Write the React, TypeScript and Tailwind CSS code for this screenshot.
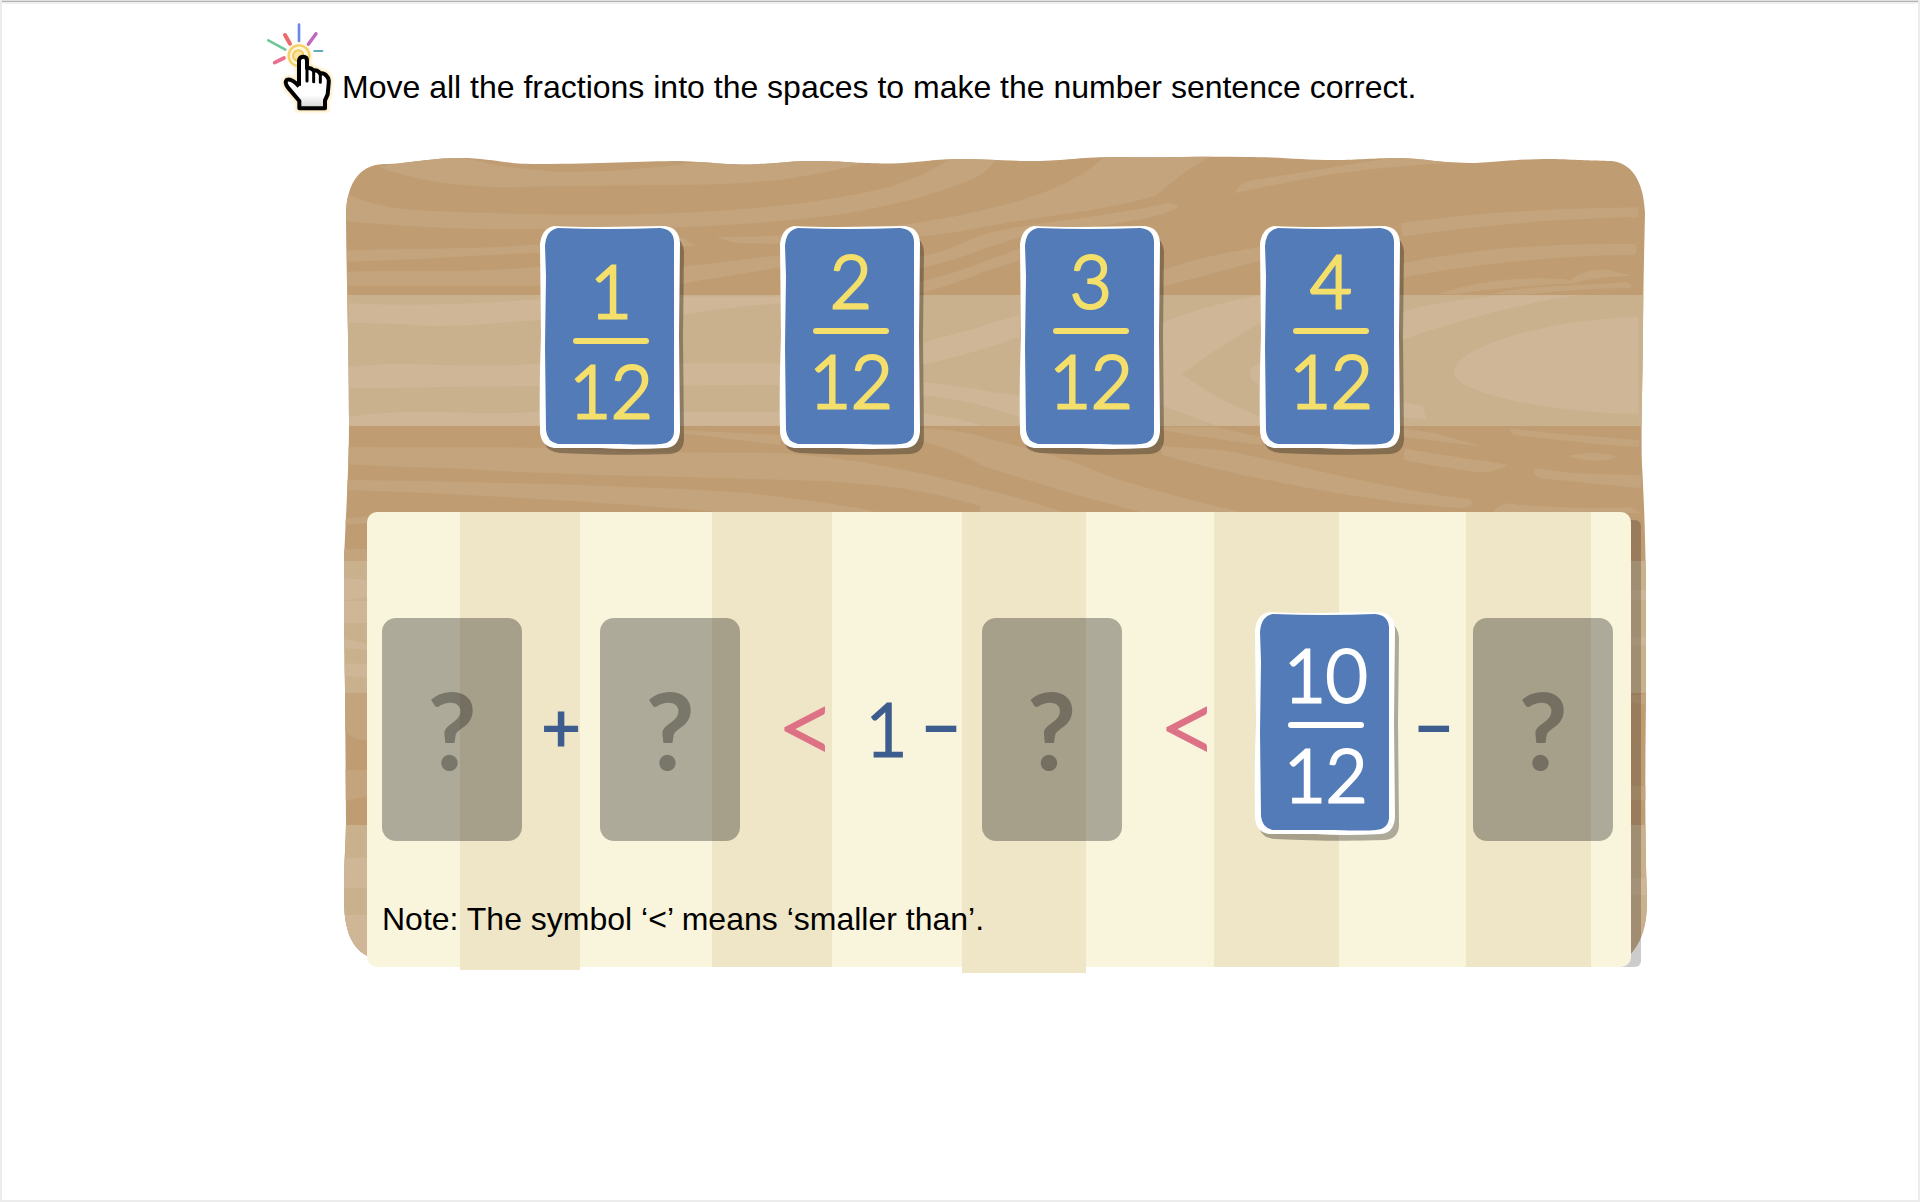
import React from "react";

const DARK = "#bf9c72";
const DARK_GRAIN = "#c4a47c";
const PALE = "#cab18e";
const PALE_GRAIN = "#ceb696";

const darkGrainLeft = [
  "M115 80Q230 138 420 142C700 130 900 145 1080 118Q1200 95 1260 70L1170 58L1000 68L870 66C780 85 640 98 540 95Q420 85 360 65L300 50L180 66Z",
  "M45 165Q110 200 180 208C400 225 650 228 850 218C1050 205 1200 180 1330 140Q1420 105 1480 50H1600L1545 105C1490 140 1400 180 1250 215C1100 245 900 265 700 262L500 268C350 270 180 262 30 242V160Z",
  "M915 292C1100 290 1350 270 1548 212V262C1400 300 1250 300 1070 312L960 308Z",
  "M40 332C150 325 350 330 500 312L840 295L870 318L500 338C350 345 180 362 40 365Z",
  "M40 395C200 388 350 400 500 380V437H40Z",
  "M835 380C950 365 1000 355 1075 345V380C1000 400 900 415 835 432Z",
  "M1400 350C1450 340 1500 310 1548 284V330C1500 350 1450 375 1400 385Z",
  "M1400 425C1460 410 1510 385 1548 370V398C1500 425 1450 445 1400 460Z",
  "M30 920C300 925 500 915 700 935L1080 940Q1300 960 1548 1045V1100Q1400 1040 1200 1025C900 1010 500 1005 300 985Q150 980 30 972Z",
  "M30 1020C400 1025 800 1040 1000 1060Q1200 1090 1300 1116H920C700 1090 300 1060 30 1050Z",
  "M835 870L1070 885V915L835 880Z",
  "M1405 865Q1500 870 1548 890V975Q1480 925 1405 905Z",
  "M30 1135L90 1130V1150L30 1155Z",
];

const darkGrainRight = [
  "M0 50H40Q25 85 0 105Z",
  "M0 212C100 185 230 130 290 45H540Q480 80 405 168Q300 205 180 225Q80 245 0 262Z",
  "M0 285C100 250 300 230 430 190Q460 190 455 205C400 240 300 255 95 290L0 330Z",
  "M0 370Q50 345 92 325V360Q50 380 0 398Z",
  "M420 390C500 355 570 335 650 320V360C570 390 480 420 420 440Z",
  "M585 160Q600 125 630 120C750 95 850 75 960 50L1090 68C950 78 800 100 700 130Q620 150 585 160Z",
  "M970 250C1150 215 1350 205 1518 202V232C1350 235 1150 255 975 290Z",
  "M975 370C1150 320 1350 310 1510 312Q1520 325 1510 345C1350 345 1150 370 975 412Z",
  "M1060 462C1120 430 1220 412 1300 415Q1350 415 1360 422Q1400 380 1450 390L1505 408C1450 410 1400 415 1370 430Q1200 440 1100 462Z",
  "M1180 462C1280 430 1400 440 1490 425Q1505 430 1500 445C1400 445 1330 455 1260 464Z",
  "M0 890Q200 950 300 1010C450 1070 550 1100 600 1116H370Q200 1060 0 975Z",
  "M0 1045Q100 1075 190 1116H0Z",
  "M415 918L560 930C750 980 950 1050 1130 1078Q1145 1095 1110 1104C900 1090 600 1010 420 945Z",
  "M420 862H545Q600 880 650 890V915Q500 890 420 870Z",
  "M975 865L1050 880L1160 920L975 890Z",
  "M980 925C1080 950 1150 960 1220 975Q1180 1000 1150 997Q1080 985 975 960Z",
  "M1218 865L1320 880L1520 900V922C1400 910 1300 895 1230 885Z",
  "M1355 947Q1420 930 1470 950Q1420 975 1355 947Z",
  "M1280 985L1370 1000L1525 1005V1045L1290 1015Q1270 1000 1280 985Z",
  "M1185 1112Q1210 1080 1240 1095L1400 1105L1500 1102L1525 1120L1185 1116Z",
];

const paleGrainLeft = [
  "M45 490C200 500 350 490 500 478V540C400 545 280 570 180 552L45 548Z",
  "M45 680C200 660 350 690 500 670H1070V735L500 738L45 745Z",
  "M45 830C200 800 350 830 500 815H1070V857H45Z",
  "M835 470H1070V490Q950 500 835 525Z",
  "M1405 610C1460 590 1510 573 1548 560V628Q1480 655 1405 675Z",
  "M1405 725Q1480 735 1548 750V795Q1480 775 1405 765Z",
  "M1405 820Q1480 830 1548 857H1405Z",
];

const paleGrainRight = [
  "M0 560Q50 540 92 525V590Q50 610 0 630Z",
  "M0 750Q50 762 92 768V830Q50 815 0 795Z",
  "M415 550Q520 495 630 470H650V545Q550 620 465 702Q560 790 650 830V857H545Q470 820 415 795Z",
  "M650 665Q620 680 622 702Q625 730 650 735Z",
  "M970 520C1020 490 1120 480 1200 466H1380C1250 490 1100 540 970 602Z",
  "M1518 530C1300 540 1095 620 1092 697C1100 770 1350 820 1518 822Z",
  "M970 785L1020 797L1030 840L970 830Z",
];

function Grain({ paths, fill, transform }: { paths: string[]; fill: string; transform: string }) {
  return (
    <g fill={fill} transform={transform}>
      {paths.map((d) => (
        <path key={d} d={d} />
      ))}
    </g>
  );
}

const LEFT = "translate(330 140) scale(.421 .3333)";
const RIGHT = "translate(980 140) scale(.4337 .3333)";

function WoodenBoard() {
  return (
    <svg
      aria-hidden="true"
      viewBox="344 156 1302 811"
      preserveAspectRatio="none"
      className="absolute inset-0 h-full w-full overflow-visible"
    >
      <defs>
        <clipPath id="board">
          <path d="M346 213C347 188 356 165 384 164C410 164 425 158 460 158C492 158 500 164 540 164C600 164 640 161 680 161C710 162 720 164.500 752 164.500C785 163 790 160.500 822 161C855 162 860 163.500 893 163.500C925 162 935 159 960 159C990 159 1005 161 1040 161C1070 160 1080 157 1120 157C1160 158 1200 156 1245 157C1280 157 1300 160 1335 160C1360 160 1370 158 1400 158C1430 159 1440 163 1475 163C1510 161 1520 159 1555 159C1580 160 1590 160.500 1612 161C1636 164 1644 188 1645 213C1644 260 1643 300 1643 340C1642 400 1641 440 1642 465C1644 500 1645 530 1646 580V700C1645 780 1645 840 1647 900C1647 930 1640 944 1628 957H370C352 950 344 930 344 900C344 860 346 840 346 820L345 690L344 620V560C346 510 349 470 349 420C349 350 346 260 346 213Z" />
        </clipPath>
        <clipPath id="left-half">
          <rect x="330" y="150" width="650" height="820" />
        </clipPath>
      </defs>
      <g clipPath="url(#board)">
        <rect x="330" y="150" width="1330" height="820" fill={DARK} />
        <rect x="330" y="295" width="1330" height="131" fill={PALE} />
        <rect x="330" y="561" width="1330" height="132" fill={PALE} />
        <rect x="330" y="825" width="1330" height="145" fill={PALE} />
        <g clipPath="url(#left-half)">
          <Grain paths={darkGrainLeft} fill={DARK_GRAIN} transform={LEFT} />
          <Grain paths={paleGrainLeft} fill={PALE_GRAIN} transform={LEFT} />
        </g>
        <Grain paths={darkGrainRight} fill={DARK_GRAIN} transform={RIGHT} />
        <Grain paths={paleGrainRight} fill={PALE_GRAIN} transform={RIGHT} />
        <g fill={DARK_GRAIN}>
          <path d="M340 549H368V561H340Z" />
          <path d="M342 693H368V741Q352 740 344 730Z" />
          <path d="M340 770H368V796L340 802Z" />
          <path d="M1630 696L1648 694V705L1630 702ZM1630 786H1648V800H1630Z" />
        </g>
        <g fill={PALE_GRAIN}>
          <path d="M340 578L368 580V597L340 601ZM340 601H368V623H340ZM340 638L368 644V650L340 648ZM340 663L368 664V678L340 675Z" />
          <path d="M340 858H368V888H340ZM340 915H368V960H340ZM1630 590H1648V600H1630ZM1630 637H1648V645H1630ZM1630 878H1648V895H1630Z" />
        </g>
      </g>
    </svg>
  );
}

function PointerIcon() {
  const hand =
    "M117 212V136Q119 125 130 125Q141 125 141 137V160Q152 156 160 166Q173 164 180 175Q193 173 200 183Q208 190 206 205L203 238L195 256V280H118V258L84 218Q73 203 80 195Q94 188 117 214";
  return (
    <svg aria-hidden="true" viewBox="0 0 240 300" className="h-[100px] w-20 shrink-0">
      <defs>
        <linearGradient id="palm" x1="0" y1="0" x2="0" y2="1">
          <stop offset=".75" stopColor="#fff" />
          <stop offset="1" stopColor="#d0d0d0" />
        </linearGradient>
        <filter id="glow" x="-30%" y="-30%" width="160%" height="160%">
          <feGaussianBlur stdDeviation="5" />
        </filter>
      </defs>
      <path d={hand} fill="none" stroke="#fbe3a4" strokeWidth="22" opacity=".8" filter="url(#glow)" />
      <circle cx="117" cy="122" r="36" fill="#fdf0c0" filter="url(#glow)" />
      <g strokeLinecap="round" fill="none">
        <path d="M117 29V78" stroke="#6d86ea" strokeWidth="8" />
        <path d="M75 60L90 86" stroke="#ec6a6c" strokeWidth="12" />
        <path d="M168 56L145 88" stroke="#bd68bd" strokeWidth="10" />
        <path d="M25 76L76 104" stroke="#6fc69a" strokeWidth="8" />
        <path d="M163 108H187" stroke="#5fabbd" strokeWidth="6" />
        <path d="M44 143L72 129" stroke="#e9708f" strokeWidth="11" />
      </g>
      <circle cx="117" cy="122" r="31" fill="#fff7dc" stroke="#f6cf68" strokeWidth="7" />
      <circle cx="115" cy="122" r="16" fill="#fbe49c" stroke="#f4c95c" strokeWidth="6" />
      <path d={hand} fill="url(#palm)" stroke="#000" strokeWidth="12" strokeLinejoin="round" />
      <path d="M141 155V198M161 166V200M181 176V202" stroke="#000" strokeWidth="9" fill="none" strokeLinecap="round" />
    </svg>
  );
}

function CardShape() {
  return (
    <svg aria-hidden="true" viewBox="0 0 140 223" className="absolute inset-0 h-full w-full overflow-visible">
      <path
        d="M18 6Q70 8 130 8Q143 12 144 26L143 110L144 214Q143 227 130 228Q80 230 20 227Q8 226 5 218Z"
        fill="#000"
        fillOpacity=".3"
      />
      <path
        d="M14 0Q30 1 60 1L124 0Q139 1 140 17L139 110L140 205Q139 221 126 222Q90 224 60 222L14 222Q1 220 0 206Q-1 160 1 110L0 18Q2 2 14 0Z"
        fill="#fff"
      />
      <path
        d="M18 2Q70 4 120 2Q133 3 134 15V206Q133 217 121 218Q110 219 80 218H18Q7 216 6 204L5 120L6 50L5 20Q6 4 18 2Z"
        fill="#537bb8"
      />
    </svg>
  );
}

const digit = "font-[Lato,sans-serif] text-[72px] leading-[72px] font-light";

function FractionFace({ top, bottom, tone, nudge }: { top: string; bottom: string; tone: string; nudge: string }) {
  return (
    <span
      className={`relative flex h-[223px] flex-col items-center justify-center gap-2.5 pl-0.5 ${nudge} ${tone} ${digit}`}
    >
      <span className="mb-0.5">{top}</span>
      <span className="h-1.5 w-[76px] rounded-full bg-current" />
      <span>{bottom}</span>
    </span>
  );
}

function FractionCard({ top, nudge }: { top: string; nudge: string }) {
  return (
    <button type="button" aria-label={`${top}/12`} className="relative w-[140px] cursor-grab">
      <CardShape />
      <FractionFace top={top} bottom="12" nudge={nudge} tone="text-[#f4df6b] [-webkit-text-stroke:3px_#f4df6b]" />
    </button>
  );
}

function Slot() {
  return (
    <button
      type="button"
      aria-label="Empty space"
      className="h-[223px] rounded-[14px] bg-black/30 pb-1 font-[Lato,sans-serif] text-[108px] leading-[108px] font-bold text-black/30"
    >
      ?
    </button>
  );
}

function Operator({ children, className }: { children: React.ReactNode; className: string }) {
  return (
    <span className={`flex h-[223px] items-center justify-center font-[Lato,sans-serif] font-light ${className}`}>
      {children}
    </span>
  );
}

const navyDigit = "pb-1 text-[72px] leading-[72px] text-[#3d5d8e] [-webkit-text-stroke:3px_#3d5d8e]";
const navySign = "pb-2 text-[64px] leading-[64px] text-[#3d5d8e] [-webkit-text-stroke:4px_#3d5d8e]";
const pink = "pb-3 text-[100px] leading-[100px] text-[#dd7186] [-webkit-text-stroke:3px_#dd7186]";

export default function App() {
  return (
    <div className="min-h-screen border-x-2 border-b-2 border-[#ececec] bg-white font-['Liberation_Sans',Arial,sans-serif] text-black">
      <div className="h-0.5 border-b border-[#b0b0b0] bg-[#e0e0e0]" />
      <div className="h-0.5 bg-[#f0f0f0]" />
      <main className="mx-auto max-w-[1400px] pt-[11px]">
        <header className="flex items-end">
          <PointerIcon />
          <h1 className="mb-2 ml-0.5 text-[32px] leading-10">
            Move all the fractions into the spaces to make the number sentence correct.
          </h1>
        </header>

        <section className="relative mt-[41px] mr-[14px] ml-[84px] pt-[70px]">
          <WoodenBoard />
          <div className="relative flex gap-[100px] pl-[196px]">
            <FractionCard top="1" nudge="pt-1" />
            <FractionCard top="2" nudge="pb-4" />
            <FractionCard top="3" nudge="pb-4" />
            <FractionCard top="4" nudge="pb-4" />
          </div>

          <div className="relative mt-[63px] mr-[15px] ml-[23px] rounded-[10px] bg-[#f9f4dc] shadow-[14px_4px_0_-4px_rgba(0,0,0,0.2)]">
            <div
              aria-hidden="true"
              className="absolute inset-0 grid grid-cols-[93fr_120fr_132fr_120fr_130fr_124fr_128fr_125fr_127fr_125fr_40fr]"
            >
              <i className="col-start-2 -mb-[3px] bg-[#eee6c6]" />
              <i className="col-start-4 bg-[#eee6c6]" />
              <i className="col-start-6 -mb-[6px] bg-[#eee6c6]" />
              <i className="col-start-8 bg-[#eee6c6]" />
              <i className="col-start-10 bg-[#eee6c6]" />
            </div>
            <div className="relative pt-[100px] pr-[18px] pb-7 pl-[15px]">
              <div className="grid grid-cols-[140px_minmax(0,78fr)_140px_minmax(0,132fr)_minmax(0,28fr)_minmax(0,81fr)_140px_minmax(0,133fr)_140px_minmax(0,78fr)_140px] items-end">
                <Slot />
                <Operator className={navySign}>+</Operator>
                <Slot />
                <Operator className={pink}>&lt;</Operator>
                <Operator className={navyDigit}>1</Operator>
                <Operator className={navySign}>−</Operator>
                <Slot />
                <Operator className={pink}>&lt;</Operator>
                <div className="relative mb-1.5">
                  <CardShape />
                  <FractionFace top="10" bottom="12" nudge="pt-0" tone="text-white [-webkit-text-stroke:3px_#fff]" />
                </div>
                <Operator className={navySign}>−</Operator>
                <Slot />
              </div>
              <p className="mt-[58px] text-[32px] leading-10">Note: The symbol ‘&lt;’ means ‘smaller than’.</p>
            </div>
          </div>
        </section>
      </main>
    </div>
  );
}
